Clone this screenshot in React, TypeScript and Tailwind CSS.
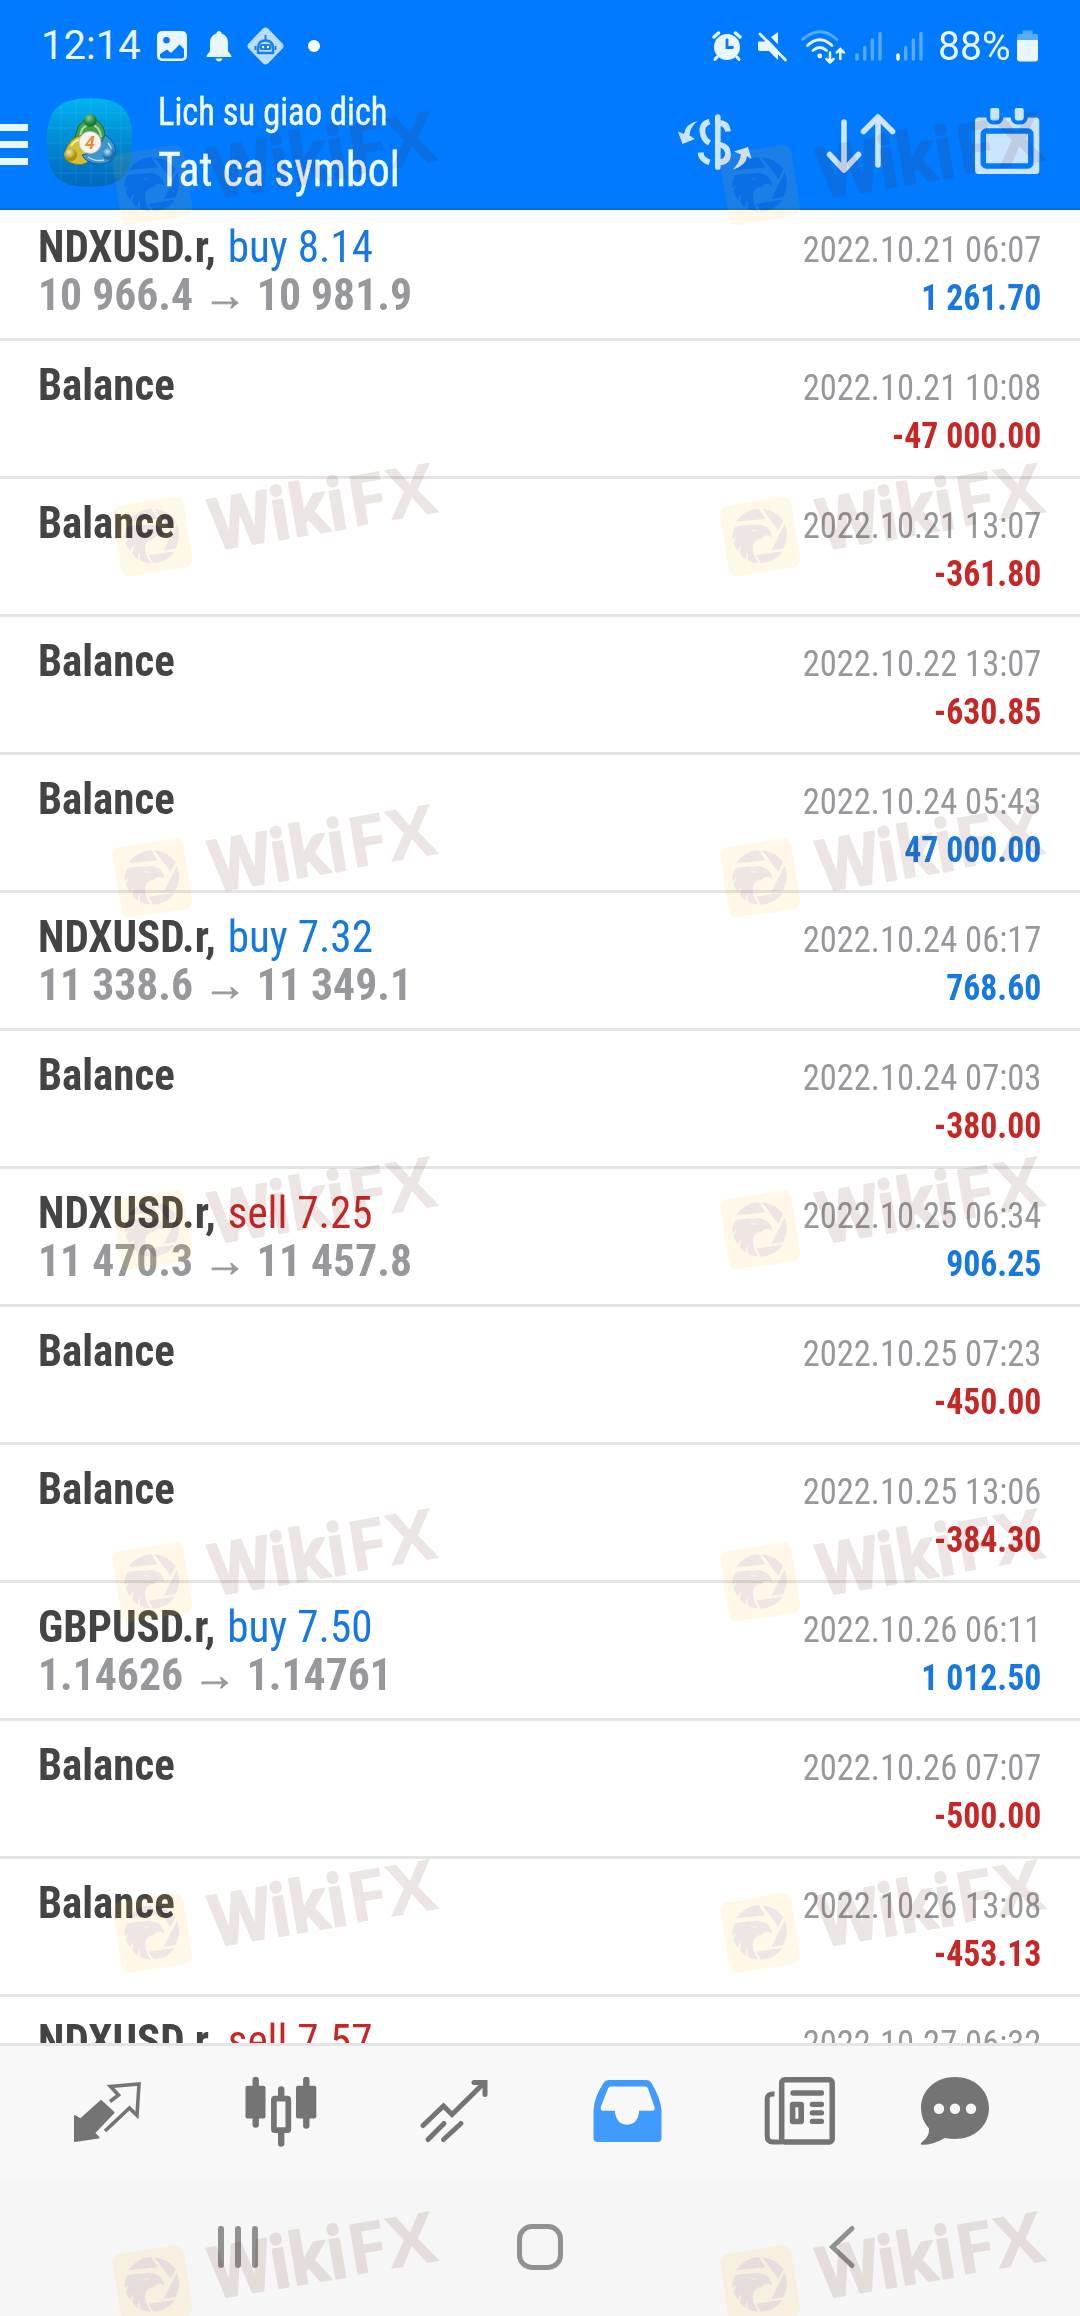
import type { ReactNode } from "react";

interface Deal {
  symbol?: string;
  side?: "buy" | "sell";
  volume?: string;
  open?: string;
  close?: string;
  time: string;
  profit: string;
}

const deals: Deal[] = [
  { symbol: "NDXUSD.r", side: "buy", volume: "8.14", open: "10 966.4", close: "10 981.9", time: "2022.10.21 06:07", profit: "1 261.70" },
  { time: "2022.10.21 10:08", profit: "-47 000.00" },
  { time: "2022.10.21 13:07", profit: "-361.80" },
  { time: "2022.10.22 13:07", profit: "-630.85" },
  { time: "2022.10.24 05:43", profit: "47 000.00" },
  { symbol: "NDXUSD.r", side: "buy", volume: "7.32", open: "11 338.6", close: "11 349.1", time: "2022.10.24 06:17", profit: "768.60" },
  { time: "2022.10.24 07:03", profit: "-380.00" },
  { symbol: "NDXUSD.r", side: "sell", volume: "7.25", open: "11 470.3", close: "11 457.8", time: "2022.10.25 06:34", profit: "906.25" },
  { time: "2022.10.25 07:23", profit: "-450.00" },
  { time: "2022.10.25 13:06", profit: "-384.30" },
  { symbol: "GBPUSD.r", side: "buy", volume: "7.50", open: "1.14626", close: "1.14761", time: "2022.10.26 06:11", profit: "1 012.50" },
  { time: "2022.10.26 07:07", profit: "-500.00" },
  { time: "2022.10.26 13:08", profit: "-453.13" },
  { symbol: "NDXUSD.r", side: "sell", volume: "7.57", time: "2022.10.27 06:32", profit: "" },
];

function Signal({ active }: { active?: boolean }) {
  return (
    <svg className="h-[30px] w-[27px] text-[#59a9ff]" viewBox="0 0 27 30" stroke="currentColor" strokeWidth="3.4" strokeLinecap="round">
      <path d="M2 24v4" stroke={active ? "#fff" : "currentColor"} />
      <path d="M9.7 16.5V28M17.4 9V28M25 2.5V28" />
    </svg>
  );
}

function StatusBar() {
  return (
    <div className="flex h-[92px] items-center pl-[41px] pr-[42px] text-[#eaf6ff]">
      <span className="w-[113px] text-[40px] leading-none">12:14</span>
      <svg className="ml-[3px] size-[30px]" viewBox="0 0 30 30">
        <path
          fill="currentColor"
          fillRule="evenodd"
          d="M5 0h20a5 5 0 0 1 5 5v20a5 5 0 0 1-5 5H5a5 5 0 0 1-5-5V5a5 5 0 0 1 5-5ZM9.500 6a3.300 3.300 0 1 0 0 6.600a3.300 3.300 0 0 0 0-6.600ZM3 23v2.500a2 2 0 0 0 2 2h20a2 2 0 0 0 2-2V18l-4.500-4.500L14 22l-4-3.500Z"
        />
      </svg>
      <svg className="ml-[19px] h-[31px] w-[26px]" viewBox="0 0 26 31" fill="currentColor">
        <path d="M13 0c1.500 0 2.500 1 2.500 2.500C20 3.800 22 7.500 22 12v7c0 3 3.500 4 3.500 7H.5c0-3 3.500-4 3.500-7v-7c0-4.500 2-8.200 6.500-9.500C10.500 1 11.500 0 13 0ZM9.500 27.500h7q-1 3-3.500 3t-3.500-3Z" />
      </svg>
      <svg className="ml-[15px] h-[38px] w-[37px]" viewBox="0 0 37 38">
        <path d="M16 1.500q2.500-2 5 0L35.500 16.500q2 2.500 0 5L21 36.500q-2.500 2-5 0L1.500 21.500q-2-2.500 0-5Z" fill="#b9dcff" />
        <path d="M18.500 8v5M8.500 19v4M28.500 19v4" stroke="#1b7fe8" strokeWidth="2" />
        <path d="M11 26v-5q0-7.500 7.500-7.500T26 21v5Z" fill="none" stroke="#1b7fe8" strokeWidth="2.400" strokeLinejoin="round" />
        <rect x="12.500" y="17" width="12" height="6" rx="2" fill="#1b7fe8" />
        <circle cx="16" cy="20" r="1.200" fill="#fff" />
        <circle cx="21" cy="20" r="1.200" fill="#fff" />
      </svg>
      <span className="ml-6 size-3 rounded-full bg-white" />

      <svg className="ml-auto size-[30px]" viewBox="0 0 30 30" fill="none" stroke="currentColor" strokeLinecap="round">
        <circle cx="15" cy="16" r="13" fill="currentColor" stroke="none" />
        <path d="M2 6l4.500-4M28 6l-4.500-4" strokeWidth="3.400" />
        <path d="M5 26l-2 2.500M25 26l2 2.500" strokeWidth="3" />
        <path d="M15 9v7.500h5.500" stroke="#007aff" strokeWidth="2.800" />
      </svg>
      <svg className="ml-[15px] h-[31px] w-[30px]" viewBox="0 0 30 31">
        <path d="M1 10.500h7L21 1v28l-9-9H3q-2 0-2-2Z" fill="currentColor" />
        <path d="M5.500 0L30 26" stroke="#007aff" strokeWidth="4" />
        <path d="M3 3l25.500 26" stroke="currentColor" strokeWidth="2.800" strokeLinecap="round" />
      </svg>
      <svg className="ml-[13px] h-9 w-[46px]" viewBox="0 0 46 36" fill="none" stroke="currentColor" strokeWidth="2.800" strokeLinecap="round">
        <path d="M2.500 11.500Q19.700-4 37 11.500" stroke="#59a9ff" />
        <path d="M7.500 17.500Q19.700 6 32 17.500M13 22.500Q19.700 16.500 26.500 22.500" />
        <circle cx="19.700" cy="28" r="2.400" fill="currentColor" stroke="none" />
        <path d="M30 24.500v9.500M26.500 31l3.500 3.500 3.500-3.500M40.300 31v-9.500M36.800 24.500l3.500-3.500 3.500 3.500" strokeWidth="2.500" />
      </svg>
      <span className="ml-[9px] flex gap-3.5">
        <Signal />
        <Signal active />
      </span>
      <span className="ml-[15px] w-[73px] origin-left scale-x-[0.955] text-[41px] leading-none">88%</span>
      <svg className="ml-[6px] h-8 w-[21px]" viewBox="0 0 21 32">
        <path d="M5.500 0.500h10V4H19q2 0 2 2v5H0V6q0-2 2-2h3.500Z" fill="#59a9ff" />
        <path d="M0 10h21v18.500q0 3-3 3H3q-3 0-3-3Z" fill="currentColor" />
      </svg>
    </div>
  );
}

function AppLogo() {
  return (
    <svg className="size-[90px]" viewBox="0 0 90 90">
      <defs>
        <linearGradient id="logo-sky" x1="0" y1="0" x2="0" y2="1">
          <stop offset="0" stopColor="#00b4ef" />
          <stop offset="0.55" stopColor="#0085d0" />
          <stop offset="1" stopColor="#0068bd" />
        </linearGradient>
        <radialGradient id="ball-green" cx="0.4" cy="0.3">
          <stop offset="0" stopColor="#8fd08a" />
          <stop offset="1" stopColor="#1c7a35" />
        </radialGradient>
        <radialGradient id="ball-yellow" cx="0.4" cy="0.3">
          <stop offset="0" stopColor="#fff09a" />
          <stop offset="1" stopColor="#a89112" />
        </radialGradient>
        <radialGradient id="ball-blue" cx="0.4" cy="0.3">
          <stop offset="0" stopColor="#bfe6fb" />
          <stop offset="1" stopColor="#1b6fae" />
        </radialGradient>
      </defs>
      <path d="M45 1.300C76 1.300 87.500 12 87.500 45.500S76 89.700 45 89.700S1.700 79 1.700 45.500S14 1.300 45 1.300Z" fill="url(#logo-sky)" />
      <path d="M16 8v74M31 3v85M46 2v87M61 3v85M76 8v74M8 16h74M3 31h83M2 46h85M3 61h83M8 76h74" stroke="#7fd4ff" strokeOpacity="0.14" />
      <path d="M30 49Q29 24 45.300 21Q62 24 60.500 49Z" fill="#3f9f4b" stroke="#1c6b35" strokeWidth="1" />
      <path d="M35 40Q36 29 45.300 27Q55 29 56 40" fill="none" stroke="#a9dca0" strokeWidth="2" />
      <path d="M45 38Q29 36 22 50Q15 66 33 67.500Q42 68 46 61Z" fill="#d2c232" stroke="#83760f" strokeWidth="1" />
      <path d="M26 49Q31 41 40 42" fill="none" stroke="#f5eea0" strokeWidth="2" />
      <path d="M60 38Q74 47 69 60Q63 68 53 67Q41 66 37 58L52 54Z" fill="#3d95cf" stroke="#165a92" strokeWidth="1" />
      <path d="M43 60Q50 65 59 63M63 46Q67 50 66 55" fill="none" stroke="#b5e0f8" strokeWidth="1.500" />
      <circle cx="45.300" cy="23.500" r="6.500" fill="url(#ball-green)" />
      <circle cx="25.500" cy="58" r="6.500" fill="url(#ball-yellow)" />
      <circle cx="63.500" cy="57" r="6" fill="url(#ball-blue)" />
      <circle cx="45" cy="45.500" r="11" fill="#f6f3f1" stroke="#c9b9b0" strokeWidth="0.800" />
      <text x="45" y="52" textAnchor="middle" className="fill-[#ef8b3a] font-['Roboto'] text-[18px] font-bold italic">4</text>
    </svg>
  );
}

function Header() {
  return (
    <header className="h-[210px] border-b-2 border-[#0f6cc8] bg-[#007aff]">
      <StatusBar />
      <div className="flex h-[100px] items-center text-[#cbe4ff]">
        <div className="mt-1 flex flex-col gap-[10px]">
          <span className="h-[7px] w-7 bg-[#eaf6ff]" />
          <span className="h-[7px] w-7 bg-[#eaf6ff]" />
          <span className="h-[7px] w-7 bg-[#eaf6ff]" />
        </div>
        <div className="ml-[17px]">
          <AppLogo />
        </div>
        <div className="-mt-1 ml-[23px] w-[320px] self-start text-[#f0fbff] font-stretch-condensed">
          <div className="origin-left scale-x-[0.908] text-[38px] leading-[48px] whitespace-nowrap [-webkit-text-stroke:0.4px]">Lich su giao dich</div>
          <div className="mt-0.5 origin-left scale-x-[0.918] text-[48px] leading-[64px] whitespace-nowrap [-webkit-text-stroke:0.4px]">Tat ca symbol</div>
        </div>
        <svg className="ml-auto h-[60px] w-[78px]" viewBox="0 0 78 60" fill="currentColor">
          <path d="M41.800 5v50" stroke="currentColor" strokeWidth="5.700" strokeLinecap="round" />
          <path
            d="M43 11Q51 11 52 19.500M43 32.500Q52 34 52 42T43 50.500M33.500 9.500Q25.500 12 26.500 20Q27 27 33.500 31M24.500 40.500Q25 47.500 33.500 50.500"
            fill="none"
            stroke="currentColor"
            strokeWidth="5.800"
          />
          <path d="M21.700 9Q9 12 8 22L2 19.500L6.500 32L19 27L13.500 23.500Q14 15 21.700 9ZM57 57.500Q70 54 71 44L75.500 47L72 35L58 39.500L65 42.500Q64 50 57 57.500Z" />
        </svg>
        <svg className="ml-[71px] h-16 w-[72px]" viewBox="0 -2 72 64" fill="none" stroke="currentColor" strokeWidth="5.600" strokeLinecap="round" strokeLinejoin="round">
          <path d="M19 10v48M4.500 42.500L19 58l14.500-15.500M53 53V5M38.500 19.500L53 5l14.500 14.500" />
        </svg>
        <svg className="mr-10 ml-[77px] h-[68px] w-[66px]" viewBox="0 1 66 68" fill="currentColor">
          <rect x="1" y="10.500" width="64.300" height="56.500" rx="3.500" />
          <rect x="9.300" y="24" width="47.500" height="35" rx="3" fill="none" stroke="#007aff" strokeWidth="5.500" />
          <rect x="14.300" y="-1.500" width="13" height="17" rx="5" stroke="#007aff" strokeWidth="4" />
          <rect x="38.700" y="-1.500" width="13" height="17" rx="5" stroke="#007aff" strokeWidth="4" />
        </svg>
      </div>
    </header>
  );
}

function DealRow({ deal }: { deal: Deal }) {
  const sideColor = deal.side === "sell" ? "text-[#c62828]" : "text-[#1778e0]";
  const profitColor = deal.profit.startsWith("-") ? "text-[#c62828]" : "text-[#1778e0]";

  return (
    <li className="flex h-[138px] justify-between border-b-[3px] border-[#e4e4e4] pr-[39px] pl-[38px] whitespace-nowrap font-stretch-condensed">
      <div className="pt-5 text-[44px] leading-[48px]">
        {deal.symbol ? (
          <>
            <div className="origin-left scale-x-[0.98] word-spacing-[2px]">
              <span className="mr-[2px] font-bold text-[#444]">{deal.symbol},</span>{" "}
              <span className={sideColor}>
                {deal.side} {deal.volume}
              </span>
            </div>
            <div className="origin-left scale-x-[0.992] font-bold text-[#97989c]">
              {deal.open} <span className="[-webkit-text-stroke:0.8px]">→</span> {deal.close}
            </div>
          </>
        ) : (
          <div className="origin-left scale-x-[0.975] font-bold text-[#444]">Balance</div>
        )}
      </div>
      <div className="pt-[22px] text-right text-[37.5px] leading-[48px]">
        <div className="origin-right scale-x-[0.92] text-[#97989c]">{deal.time}</div>
        <div className={`origin-right scale-x-[0.9] font-bold ${profitColor}`}>{deal.profit}</div>
      </div>
    </li>
  );
}

function TabIcon({ children }: { children: ReactNode }) {
  return (
    <svg className="size-[72px]" viewBox="0 0 72 72" fill="currentColor">
      {children}
    </svg>
  );
}

function TabBar() {
  return (
    <nav className="flex h-[138px] gap-[101px] border-t-[3px] border-[#e4e4e4] bg-[#f8f8f8] pt-[29px] pl-[72px] text-[#747474]">
      <TabIcon>
        <path d="M3 41L8.500 44.500L29 26L41.500 37.500L22 58L26.500 62.500L3 66Z" stroke="currentColor" strokeWidth="2" strokeLinejoin="round" />
        <path d="M38 26.500L46.500 20L38.500 11.500L67 9L65 40.500L57.500 33L33 56" fill="none" stroke="currentColor" strokeWidth="3.600" />
      </TabIcon>
      <TabIcon>
        <path d="M10.700 5v44.500M36.200 14.500v54M61.300 5v45.500" stroke="currentColor" strokeWidth="6.400" strokeLinecap="round" />
        <rect x="0.500" y="10.700" width="20" height="32.700" rx="2" />
        <rect x="51" y="10.700" width="20.300" height="32.700" rx="2" />
        <rect x="28.900" y="23.700" width="14.400" height="31.500" rx="1" fill="#f8f8f8" stroke="currentColor" strokeWidth="5.700" />
      </TabIcon>
      <TabIcon>
        <g fill="none" stroke="currentColor" strokeWidth="5" strokeLinecap="round">
          <path d="M5 50.500L25.500 31L34 39.500L66 8" />
          <path d="M56 7.500H67V19.500" />
          <path d="M10 64.500L26 48.500M25.500 64.500L43 48.500" />
        </g>
      </TabIcon>
      <svg className="size-[72px] text-[#419bff]" viewBox="0 0 72 72" fill="currentColor">
        <path
          fillRule="evenodd"
          d="M18 5H55Q58.500 5 60.500 8Q70 24 70.500 36V63Q70.500 67 66.500 67H6.500Q2.500 67 2.500 63V36Q3 22 12.500 8Q14.500 5 18 5ZM20 11.500Q18 11.500 17 13.500L9.800 32Q9 35.700 12 35.700H24V38Q26 49.700 36 49.700T48 38V35.700H61Q64.500 35.700 63.500 32L57 13.500Q56 11.500 53.500 11.500Z"
        />
      </svg>
      <TabIcon>
        <rect x="17.700" y="4.700" width="50.500" height="62.300" rx="3" fill="none" stroke="currentColor" strokeWidth="5.500" />
        <path d="M10.500 19Q3.200 18.500 3.200 24V61Q3.200 67 9 67H18" fill="none" stroke="currentColor" strokeWidth="5" />
        <rect x="26.400" y="15.300" width="33.600" height="5.400" rx="2.500" />
        <rect x="28.600" y="29.500" width="8.600" height="17" rx="0.500" fill="none" stroke="currentColor" strokeWidth="5.600" strokeLinejoin="round" />
        <rect x="45.700" y="26.700" width="14.400" height="5.400" rx="2.500" />
        <rect x="45.700" y="35.200" width="14.400" height="5.400" rx="2.500" />
        <rect x="45.700" y="43.700" width="14.400" height="5.400" rx="2.500" />
      </TabIcon>
      <div className="-ml-[18px]">
        <TabIcon>
          <path d="M36 2C55 2 70 15 70 33S55 64 36 64Q31 64 26 63Q14 70 3 69.800Q.5 69 3 67Q10.500 62 10 53.500Q2 45 2 33C2 15 17 2 36 2Z" />
          <g fill="#f8f8f8">
            <circle cx="20" cy="33.700" r="5.200" />
            <circle cx="36" cy="33.700" r="5.200" />
            <circle cx="52" cy="33.700" r="5.200" />
          </g>
        </TabIcon>
      </div>
    </nav>
  );
}

function SystemNav() {
  return (
    <div className="flex h-[135px] items-center bg-[#f6f6f6] pb-[3px] text-[#919191]">
      <div className="ml-[218px] flex gap-[11.500px]">
        <span className="h-[42px] w-[5.500px] rounded-full bg-current" />
        <span className="h-[42px] w-[5.500px] rounded-full bg-current" />
        <span className="h-[42px] w-[5.500px] rounded-full bg-current" />
      </div>
      <span className="ml-[259px] size-[46px] rounded-[15px] border-[5px] border-current" />
      <svg className="ml-[265px] h-[46px] w-[30px]" viewBox="0 0 30 46" fill="none" stroke="currentColor" strokeWidth="5" strokeLinecap="round">
        <path d="M24 4.500L4.500 23L24 41.500" />
      </svg>
    </div>
  );
}

const watermarkColumns = [152.400, 760.100];
const watermarkRows = [185, 536.500, 878, 1230, 1582, 1933, 2285];

function Watermarks() {
  return (
    <svg className="pointer-events-none absolute inset-0 h-[2316px] w-[1080px]" viewBox="0 0 1080 2316">
      <defs>
        <g id="eagle" transform="scale(0.3333) translate(-152 -170)">
          <path d="M148 86L168 117L80 126Q104 90 148 86ZM158 87Q198 92 222 122L207 152ZM226 132Q240 170 222 206L186 212ZM140 226L220 214Q195 248 155 250Z" />
          <path d="M77 141Q105 134 128 136Q150 131 170 141Q187 152 187 173Q178 163 165 168Q158 178 148 177Q128 186 130 208Q134 234 148 250Q128 249 116 242Q112 228 116 216Q106 226 110 239Q98 232 92 222Q92 206 98 196Q86 206 86 214Q76 202 72 190Q76 176 84 170Q74 174 69 180Q66 158 77 141ZM122 149Q132 158 147 152Q136 150 122 149Z" fillRule="evenodd" />
        </g>
        <mask id="eagle-cut" maskUnits="userSpaceOnUse" x="-50" y="-50" width="100" height="100">
          <rect x="-50" y="-50" width="100" height="100" fill="#fff" />
          <use href="#eagle" fill="#000" />
        </mask>
        <g id="watermark">
          <g mask="url(#eagle-cut)">
            <rect x="-36" y="-36" width="72" height="72" rx="9" transform="rotate(-9)" fill="#ffbe14" fillOpacity="0.1" />
          </g>
          <use href="#eagle" fill="#5a1e0a" fillOpacity="0.11" />
          <g
            transform="translate(62.600 13.800) rotate(-9.600)"
            fill="#5a1e0a"
            stroke="#5a1e0a"
            strokeLinejoin="round"
            opacity="0.11"
            className="font-['Open_Sans'] text-[71px] font-bold"
          >
            <text x="0" y="0" strokeWidth="2.500" textLength="137" lengthAdjust="spacingAndGlyphs">Wiki</text>
            <text x="138" y="0" strokeWidth="0" textLength="90" lengthAdjust="spacingAndGlyphs">FX</text>
          </g>
        </g>
      </defs>
      {watermarkRows.map((y) =>
        watermarkColumns.map((x) => <use key={`${x}-${y}`} href="#watermark" x={x} y={y} />)
      )}
    </svg>
  );
}

export default function App() {
  return (
    <div className="relative flex h-[2316px] w-[1080px] flex-col overflow-hidden bg-white font-['Roboto',sans-serif]">
      <Header />
      <main className="h-[1833px] overflow-hidden">
        <ul className="-mt-[7px]">
          {deals.map((deal) => (
            <DealRow key={deal.time} deal={deal} />
          ))}
        </ul>
      </main>
      <TabBar />
      <SystemNav />
      <Watermarks />
    </div>
  );
}
